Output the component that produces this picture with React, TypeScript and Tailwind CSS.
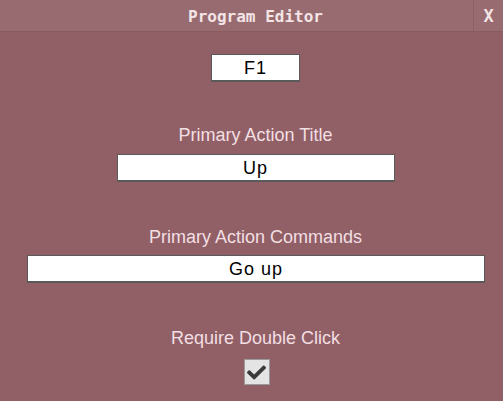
import { FaCheck } from "react-icons/fa";

const Field = ({ value, width }: { value: string; width: string }) => {
	return (
		<input
			readOnly
			value={value}
			className={`${width} h-[28px] pt-[2px] bg-white border border-[#5a5a5a] border-b-2 text-center text-[18px] tracking-[1px] text-black outline-none`}
			style={{ fontFamily: '"Liberation Sans", Arial, sans-serif' }}
		/>
	);
};

const Label = ({ children }: { children: string }) => {
	return (
		<div className="ml-[8px] text-[18px] leading-[22px] text-[#f2dfe3]">
			{children}
		</div>
	);
};

export default function App() {
	return (
		<div
			className="w-[503px] h-[401px] bg-[#915f66] flex flex-col overflow-hidden"
			style={{ fontFamily: '"Liberation Sans", Arial, sans-serif' }}>
			<div className="h-[32px] flex bg-[#986b70] border-b border-[#8a5a61]">
				<div
					className="flex-1 pl-[38px] pt-[2px] flex items-center justify-center text-[16px] font-bold text-[#f3e4e6]"
					style={{ fontFamily: '"DejaVu Sans Mono", monospace' }}>
					Program Editor
				</div>
				<div
					className="w-[30px] pt-[2px] border-l border-[#8d6066] flex items-center justify-center text-[17px] font-bold text-[#f3e4e6]"
					style={{ fontFamily: '"DejaVu Sans Mono", monospace' }}>
					X
				</div>
			</div>
			<div className="flex flex-col items-center">
				<div className="mt-[22px] ml-[8px]">
					<Field value="F1" width="w-[89px]" />
				</div>
				<div className="mt-[42px]">
					<Label>Primary Action Title</Label>
				</div>
				<div className="mt-[8px] ml-[8px]">
					<Field value="Up" width="w-[278px]" />
				</div>
				<div className="mt-[44px]">
					<Label>Primary Action Commands</Label>
				</div>
				<div className="mt-[7px] ml-[9px]">
					<Field value="Go up" width="w-[458px]" />
				</div>
				<div className="mt-[44px]">
					<Label>Require Double Click</Label>
				</div>
				<div className="mt-[10px] ml-[10px] w-[26px] h-[26px] bg-[#e4e4e4] border border-[#9a9a9a] flex items-center justify-center">
					<FaCheck className="text-[#3a3a3a]" size={19} />
				</div>
			</div>
		</div>
	);
}
